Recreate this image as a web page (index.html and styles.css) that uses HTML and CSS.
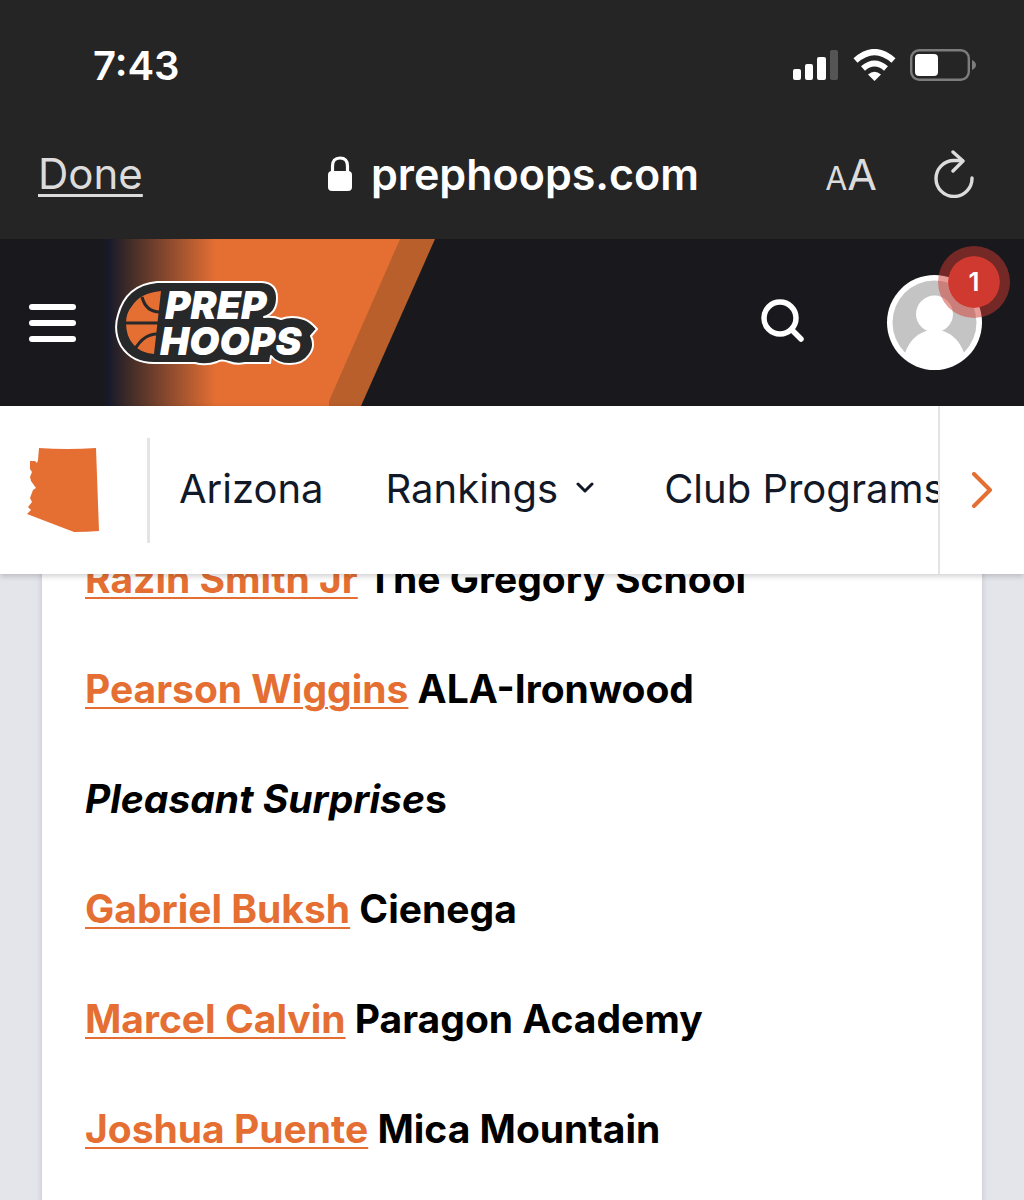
FILE: index.html
```html
<!DOCTYPE html>
<html lang="en">
<head>
    <meta charset="UTF-8">
    <meta name="viewport" content="width=device-width, initial-scale=1.0">
    <title>Prep Hoops Arizona</title>
    <link rel="stylesheet" href="styles.css">
</head>
<body>

    <div class="phone-top">
        <div class="status-bar">
            <span class="time">7:43</span>
            <div class="status-icons">
                <svg width="46" height="30" viewBox="0 0 46 30">
                    <rect x="0" y="19" width="8" height="11" rx="2" fill="#fff"/>
                    <rect x="12" y="14" width="8" height="16" rx="2" fill="#fff"/>
                    <rect x="24" y="7" width="9" height="23" rx="2" fill="#fff"/>
                    <rect x="37" y="0" width="8" height="30" rx="2" fill="#555"/>
                </svg>
                <svg width="43" height="32" viewBox="0 0 43 32">
                    <path d="M2.500 11.500Q21.500 -5.500 40.500 11.500" fill="none" stroke="#fff" stroke-width="6"/>
                    <path d="M10 19.500Q21.500 9.500 33 19.500" fill="none" stroke="#fff" stroke-width="6"/>
                    <path d="M15 25.500Q21.500 20 28 25.500L21.500 32Z" fill="#fff"/>
                </svg>
                <svg width="66" height="32" viewBox="0 0 66 32">
                    <rect x="1.200" y="1.200" width="57.600" height="29.600" rx="8" fill="none" stroke="#7c7c7c" stroke-width="2.400"/>
                    <rect x="5" y="5" width="23" height="22" rx="4" fill="#fff"/>
                    <path d="M62 11Q66 13 66 16Q66 19 62 21Z" fill="#7c7c7c"/>
                </svg>
            </div>
        </div>
        <div class="browser-bar">
            <button type="button" class="done">Done</button>
            <div class="address">
                <svg width="26" height="36" viewBox="0 0 26 36">
                    <path d="M5.500 17V10Q5.500 2 13 2Q20.500 2 20.500 10V17" fill="none" stroke="#fff" stroke-width="3.200"/>
                    <rect x="1" y="15" width="24" height="20" rx="4" fill="#fff"/>
                </svg>
                <span>prephoops.com</span>
            </div>
            <div class="browser-actions">
                <button type="button" class="text-size" aria-label="Text size"><small>A</small>A</button>
                <button type="button" aria-label="Reload">
                    <svg width="40" height="48" viewBox="0 0 40 48" fill="none" stroke="#dcdcdc" stroke-width="3.400" stroke-linecap="round" stroke-linejoin="round">
                        <path d="M38 28A18 18 0 1 1 20 10.500H28"/>
                        <path d="M19 2L29 11L19 21"/>
                    </svg>
                </button>
            </div>
        </div>
    </div>

    <header class="site-header">
        <div class="banner"></div>
        <button type="button" class="menu" aria-label="Menu">
            <span></span>
            <span></span>
            <span></span>
        </button>
        <a href="#" class="logo" aria-label="Prep Hoops">
            <svg width="204" height="86" viewBox="115 279 204 86">
                <path d="M157 281H262Q277 282 277 297Q277 312 264 316Q274 315 281 318Q292 314 304 318Q310 320 317 328L311 335Q316 345 309 354Q303 363 290 363Q277 363 271 355L270 362H245Q237 364 229 361Q221 358 217 361Q206 365 195 362H154Q132 362 121 345Q113 330 118 314Q126 284 157 281Z" fill="#27282a" stroke="#fff" stroke-width="2" stroke-linejoin="round"/>
                <path d="M161 290Q140 292 132 305Q126 312 126 322Q126 335 133 343Q140 352 154 353Z" fill="#e56f33"/>
                <path d="M125 322H158M142 296Q146 311 160 311M135 348Q144 333 157 333" fill="none" stroke="#27282a" stroke-width="3"/>
                <text x="165" y="318" class="logo-text">PREP</text>
                <text x="160" y="354" class="logo-text">HOOPS</text>
            </svg>
        </a>
        <button type="button" class="search" aria-label="Search">
            <svg width="44" height="48" viewBox="0 0 44 48" fill="none" stroke="#fff" stroke-linecap="round">
                <circle cx="19" cy="19" r="16" stroke-width="5.500"/>
                <path d="M31 31L40 40" stroke-width="5.500"/>
            </svg>
        </button>
        <a href="#" class="account" aria-label="Account">
            <svg width="95" height="95" viewBox="0 0 95 95">
                <circle cx="47.500" cy="47.500" r="47.500" fill="#fff"/>
                <circle cx="47.500" cy="47.500" r="42" fill="#c4c4c4"/>
                <circle cx="47.500" cy="39" r="18.500" fill="#fff"/>
                <path d="M18 78Q24 61 39 56H56Q71 61 77 78Q66 92 47.500 92Q29 92 18 78Z" fill="#fff"/>
            </svg>
            <span class="badge">1</span>
        </a>
    </header>

    <nav class="site-nav">
        <a href="#" class="state" aria-label="Arizona home">
            <svg width="72" height="84" viewBox="0 0 72 84">
                <path d="M12 0Q40 2 69 0L72 83Q60 84 47 84L0 66L4 62L1 59L5 54L3 50L6 42L9 40L4 33L3 29L5 24L3 21L3 13L8 13L10 15L11 12Z" fill="#e56f33"/>
            </svg>
        </a>
        <div class="nav-links">
            <a href="#">Arizona</a>
            <a href="#">Rankings
                <svg width="26" height="12" viewBox="0 0 26 12" fill="none" stroke="#111827" stroke-width="3" stroke-linecap="round" stroke-linejoin="round">
                    <path d="M2 2L9 9L16 2"/>
                </svg>
            </a>
            <a href="#">Club Programs</a>
        </div>
        <button type="button" class="nav-next" aria-label="More">
            <svg width="22" height="36" viewBox="0 0 22 36" fill="none" stroke="#e56f33" stroke-width="4" stroke-linecap="round" stroke-linejoin="round">
                <path d="M3 2L19 18L3 34"/>
            </svg>
        </button>
    </nav>

    <main>
        <article>
            <p><a href="#">Razin Smith Jr</a> The Gregory School</p>
            <p><a href="#">Pearson Wiggins</a> ALA-Ironwood</p>
            <p><em>Pleasant Surprise</em>s</p>
            <p><a href="#">Gabriel Buksh</a> Cienega</p>
            <p><a href="#">Marcel Calvin</a> Paragon Academy</p>
            <p><a href="#">Joshua Puente</a> Mica Mountain</p>
        </article>
    </main>

</body>
</html>
```

FILE: styles.css
```css
* {
    box-sizing: border-box;
}

body {
    margin: 0;
    font-family: Inter, "Liberation Sans", sans-serif;
    background-color: #e4e5ea;
    color: #000;
}

button {
    padding: 0;
    border: none;
    background: none;
    font: inherit;
    color: inherit;
    cursor: pointer;
}

svg {
    display: block;
    flex-shrink: 0;
}

/* Phone status and browser bars */
.phone-top {
    background-color: #252525;
    color: #fff;
}

.status-bar {
    display: flex;
    justify-content: space-between;
    align-items: center;
    height: 130px;
    padding: 0 48px 0 93px;
}

.time {
    font-size: 40px;
    font-weight: 600;
}

.status-icons {
    display: flex;
    align-items: center;
    gap: 14px;
}

.browser-bar {
    display: grid;
    grid-template-columns: 1fr auto 1fr;
    align-items: center;
    height: 109px;
    padding: 0 36px 22px 38px;
    font-size: 43px;
}

.done {
    justify-self: start;
    color: #dcdcdc;
    font-size: 42px;
    text-decoration: underline;
    text-decoration-thickness: 3px;
    text-underline-offset: 5px;
}

.address {
    display: flex;
    align-items: center;
    gap: 18px;
    font-weight: 600;
}

.browser-actions {
    display: flex;
    justify-content: flex-end;
    align-items: center;
    gap: 57px;
    margin-right: 14px;
    color: #dcdcdc;
}

.text-size small {
    font-size: 32px;
}

/* Site header */
.site-header {
    position: relative;
    display: flex;
    align-items: center;
    height: 167px;
    padding: 0 42px 0 29px;
    background-color: #19191d;
}

.banner {
    position: absolute;
    top: 0;
    bottom: 0;
    left: 104px;
    width: 331px;
    background-color: #b95f2b;
    clip-path: polygon(0 0, 100% 0, 257px 100%, 0 100%);
}

.banner::before {
    content: "";
    position: absolute;
    inset: 0;
    background: linear-gradient(to right, #19191d, #161a2b 4px, #3a2928 22px, #e56f33 112px);
    clip-path: polygon(0 0, 296px 0, 225px 97%, 225px 100%, 0 100%);
}

.menu {
    position: relative;
    display: flex;
    flex-direction: column;
    gap: 10px;
    width: 47px;
}

.menu span {
    height: 6px;
    border-radius: 3px;
    background-color: #fff;
}

.logo {
    position: relative;
    margin-left: 39px;
}

.logo-text {
    font-size: 39px;
    font-weight: 900;
    font-style: italic;
    fill: #fff;
}

.search {
    margin-left: auto;
    margin-right: 82px;
}

.account {
    position: relative;
}

.badge {
    position: absolute;
    top: -29px;
    right: -28px;
    width: 72px;
    height: 72px;
    border: 10px solid rgba(207, 57, 48, 0.5);
    border-radius: 50%;
    background-color: #cf3930;
    background-clip: padding-box;
    color: #fff;
    font-size: 26px;
    font-weight: 600;
    line-height: 52px;
    text-align: center;
}

/* State navigation */
.site-nav {
    position: relative;
    display: flex;
    align-items: center;
    height: 168px;
    background-color: #fff;
    box-shadow: 0 2px 6px rgba(0, 0, 0, 0.2);
}

.state {
    display: flex;
    align-items: center;
    height: 105px;
    padding: 0 48px 0 27px;
    border-right: 3px solid #e4e4e6;
}

.nav-links {
    display: flex;
    flex: 1;
    gap: 62px;
    min-width: 0;
    padding: 0 0 4px 29px;
    overflow: hidden;
}

.nav-links a {
    display: flex;
    align-items: center;
    gap: 18px;
    color: #111827;
    font-size: 40px;
    text-decoration: none;
    white-space: nowrap;
}

.nav-next {
    display: flex;
    justify-content: center;
    align-items: center;
    align-self: stretch;
    width: 86px;
    border-left: 2px solid #e4e4e6;
}

/* Article, scrolled under the navigation */
main {
    padding: 0 42px;
    overflow: hidden;
}

article {
    margin-top: -28px;
    padding: 0 43px;
    background-color: #fff;
    box-shadow: 0 0 6px rgba(0, 0, 0, 0.15);
}

article p {
    margin: 0;
    padding-bottom: 44px;
    font-size: 39px;
    font-weight: 700;
    line-height: 66px;
}

article a {
    color: #e56f33;
    text-decoration-thickness: 2px;
    text-underline-offset: 4px;
}
```
